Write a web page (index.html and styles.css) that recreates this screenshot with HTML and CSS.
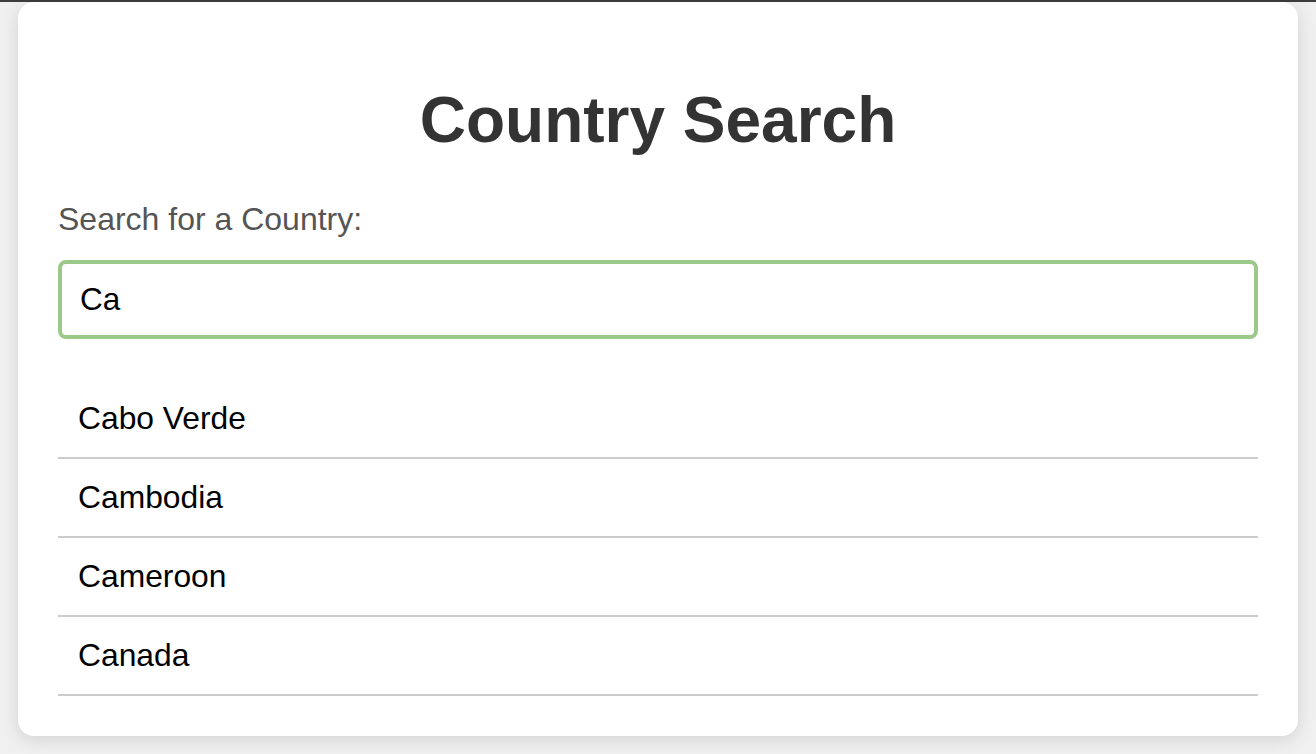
FILE: index.html
```html
<!DOCTYPE html>
<html lang="en">
<head>
<meta charset="utf-8">
<title>Country Search</title>
<link rel="stylesheet" href="styles.css">
</head>
<body>
<div class="topline"></div>
<main class="card">
  <h1 class="title">Country Search</h1>
  <label class="label" for="country">Search for a Country:</label>
  <input class="search" id="country" type="text" value="Ca" autofocus>
  <ul class="results">
    <li class="result">Cabo Verde</li>
    <li class="result">Cambodia</li>
    <li class="result">Cameroon</li>
    <li class="result">Canada</li>
  </ul>
</main>
</body>
</html>
```
FILE: styles.css
```css
html, body {
  margin: 0;
  padding: 0;
}
body {
  background: #f0f0f0;
  font-family: "Liberation Sans", Arial, sans-serif;
  height: 754px;
  overflow: hidden;
}
.topline {
  height: 2px;
  background: #3d3d3d;
}
.card {
  box-sizing: border-box;
  width: 1280px;
  margin: 0 18px;
  padding: 0 40px 40px;
  background: #fff;
  border-radius: 16px;
  box-shadow: 0 4px 18px rgba(0, 0, 0, 0.12);
}
.title {
  margin: 0;
  padding-top: 82px;
  margin-bottom: 45px;
  font-size: 64px;
  line-height: 72px;
  font-weight: bold;
  color: #333;
  text-align: center;
}
.label {
  display: block;
  font-size: 32px;
  line-height: 36px;
  color: #555;
  margin-bottom: 23px;
}
.search {
  display: block;
  box-sizing: border-box;
  width: 100%;
  height: 79px;
  padding: 0 18px;
  border: 4px solid #9bc98a;
  border-radius: 8px;
  font-family: "Liberation Sans", Arial, sans-serif;
  font-size: 31.5px;
  color: #000;
  outline: none;
  background: #fff;
  caret-color: #000;
}
.results {
  list-style: none;
  margin: 41px 0 0;
  padding: 0;
}
.result {
  padding: 20px 20px 21px;
  font-size: 31.8px;
  line-height: 36px;
  color: #000;
  border-bottom: 2px solid #ccc;
}
```
